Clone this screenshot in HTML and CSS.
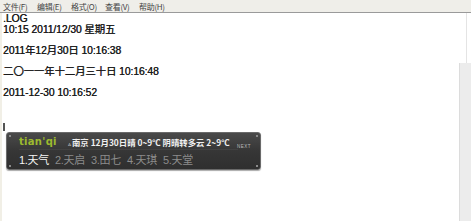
FILE: index.html
```html
<!DOCTYPE html>
<html lang="zh">
<head>
<meta charset="utf-8">
<link rel="stylesheet" href="styles.css">
</head>
<body>
<div class="win">
  <div class="menubar">
    <span class="mi">文件(F)</span>
    <span class="mi">编辑(E)</span>
    <span class="mi">格式(O)</span>
    <span class="mi">查看(V)</span>
    <span class="mi">帮助(H)</span>
  </div>
  <div class="body">
    <div class="editor">
      <div class="ln">.LOG</div>
      <div class="ln">10:15 2011/12/30 星期五</div>
      <div class="ln"></div>
      <div class="ln">2011年12月30日 10:16:38</div>
      <div class="ln"></div>
      <div class="ln">二〇一一年十二月三十日 10:16:48</div>
      <div class="ln"></div>
      <div class="ln">2011-12-30 10:16:52</div>
      <div class="ln"></div>
      <div class="ln"></div>
      <div class="ln cur-line"><span class="caret"></span></div>
      <div class="ime">
        <span class="dot tl"></span><span class="dot tr"></span><span class="dot bl"></span><span class="dot br"></span>
        <div class="ime-top">
          <span class="pinyin">tian'qi</span>
          <span class="weather"><span class="tri">▵</span>南京 12月30日晴 0~9℃ 阴晴转多云 2~9℃</span>
        </div>
        <div class="ime-bottom">
          <span class="cand on">1.天气</span>
          <span class="cand">2.天启</span>
          <span class="cand">3.田七</span>
          <span class="cand">4.天琪</span>
          <span class="cand">5.天堂</span>
          <span class="next">NEXT</span>
        </div>
      </div>
    </div>
    <div class="side">
      <div class="side-top"></div>
      <div class="scroll"></div>
    </div>
  </div>
</div>
</body>
</html>
```

FILE: styles.css
```css
html, body {
  margin: 0;
  padding: 0;
  background: #fff;
}
.win {
  width: 471px;
  height: 221px;
  display: flex;
  flex-direction: column;
  overflow: hidden;
}
.menubar {
  height: 12px;
  background: #efeee9;
  border-bottom: 1px solid #9a9a9a;
  display: flex;
  align-items: center;
  padding-left: 3px;
  gap: 6px;
  font-family: "Noto Sans CJK SC", sans-serif;
  font-size: 8px;
  color: #444;
  box-sizing: content-box;
}
.mi {
  width: 28px;
  letter-spacing: -0.3px;
}
.body {
  flex: 1;
  display: flex;
  border-left: 2px solid #f1efe6;
}
.editor {
  flex: 1;
  padding-top: 1px;
  padding-left: 1px;
  font-family: "Liberation Sans", "Noto Sans CJK SC", sans-serif;
  font-size: 10.4px;
  color: #1a1a1a;
  letter-spacing: -0.1px;
  text-shadow: 0.35px 0 0 #333;
}
.ln {
  height: 10.6px;
  line-height: 10.6px;
  white-space: pre;
}
.cur-line {
  display: flex;
  align-items: center;
}
.caret {
  width: 2px;
  height: 8px;
  background: #555;
  margin-top: 3px;
}
.ime {
  position: relative;
  margin-left: 3px;
  margin-top: 1px;
  width: 255px;
  height: 38px;
  box-sizing: border-box;
  border-radius: 3px;
  border: 1px solid #6a6a6a;
  background: linear-gradient(#4a4a4a, #363636 50%, #2f2f2f);
  box-shadow: 0 1px 1px #aaa;
  padding: 2px 0 0 12px;
  text-shadow: none;
}
.dot {
  position: absolute;
  width: 2px;
  height: 2px;
  background: #8a8a8a;
}
.dot.tl { left: 2px; top: 2px; }
.dot.tr { right: 2px; top: 2px; }
.dot.bl { left: 2px; bottom: 2px; }
.dot.br { right: 2px; bottom: 2px; }
.ime-top {
  display: flex;
  align-items: center;
  height: 14px;
  border-bottom: 1px solid #424242;
  margin-right: 22px;
}
.pinyin {
  font-family: "DejaVu Sans", sans-serif;
  font-weight: bold;
  font-size: 10px;
  color: #9dba2e;
  letter-spacing: 0.3px;
  width: 49px;
}
.weather {
  font-family: "Noto Sans CJK SC", sans-serif;
  font-size: 8.4px;
  color: #f0f0f0;
  letter-spacing: 0;
  font-weight: bold;
}
.tri {
  color: #aaa;
  font-size: 6px;
  margin-right: 1px;
}
.ime-bottom {
  display: flex;
  align-items: center;
  height: 18px;
  position: relative;
}
.cand {
  font-family: "Liberation Sans", "Noto Sans CJK SC", sans-serif;
  font-size: 11px;
  color: #8c8c8c;
  width: 36px;
  letter-spacing: -0.3px;
}
.cand.on {
  color: #f4f4f4;
}
.next {
  position: absolute;
  right: 9px;
  top: -6px;
  font-family: "Liberation Sans", sans-serif;
  font-size: 4.5px;
  color: #bbb;
  letter-spacing: 0.5px;
}
.side {
  width: 12px;
  display: flex;
  flex-direction: column;
}
.side-top {
  height: 50px;
  border-right: 4px solid #fff;
  box-sizing: border-box;
  position: relative;
}
.side-top::after {
  content: "";
  position: absolute;
  right: 0;
  top: 0;
  bottom: 0;
  width: 1px;
  background: #e4e4e4;
}
.scroll {
  flex: 1;
  background: #ececec;
  border-left: 1px solid #dcdcdc;
}
```
